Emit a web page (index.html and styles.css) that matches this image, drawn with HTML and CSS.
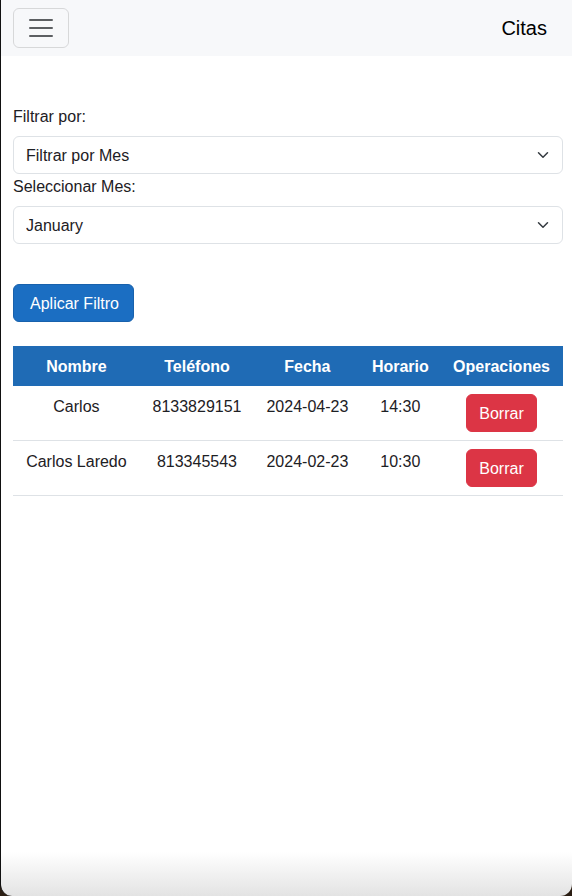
FILE: index.html
```html
<!DOCTYPE html>
<html lang="es">
<head>
<meta charset="utf-8">
<title>Citas</title>
<link rel="stylesheet" href="styles.css">
</head>
<body>
<div class="frame">
  <nav class="navbar">
    <button class="toggler" type="button" aria-label="Menu">
      <svg width="30" height="30" viewBox="0 0 30 30"><path d="M4 7h22M4 15h22M4 23h22" stroke="#5c5f62" stroke-width="2" stroke-linecap="round"/></svg>
    </button>
    <span class="brand">Citas</span>
  </nav>
  <main class="content">
    <label class="label">Filtrar por:</label>
    <div class="select-wrap">
      <select class="select"><option>Filtrar por Mes</option></select>
      <svg class="chevron" width="16" height="12" viewBox="0 0 16 16"><path d="m2 5 6 6 6-6" fill="none" stroke="#343a40" stroke-width="2" stroke-linecap="round" stroke-linejoin="round"/></svg>
    </div>
    <label class="label">Seleccionar Mes:</label>
    <div class="select-wrap">
      <select class="select"><option>January</option></select>
      <svg class="chevron" width="16" height="12" viewBox="0 0 16 16"><path d="m2 5 6 6 6-6" fill="none" stroke="#343a40" stroke-width="2" stroke-linecap="round" stroke-linejoin="round"/></svg>
    </div>
    <div class="actions">
      <button class="btn btn-primary" type="button">Aplicar Filtro</button>
    </div>
    <table class="table">
      <thead>
        <tr><th>Nombre</th><th>Teléfono</th><th>Fecha</th><th>Horario</th><th>Operaciones</th></tr>
      </thead>
      <tbody>
        <tr><td>Carlos</td><td>8133829151</td><td>2024-04-23</td><td>14:30</td><td><button class="btn btn-danger" type="button">Borrar</button></td></tr>
        <tr><td>Carlos Laredo</td><td>813345543</td><td>2024-02-23</td><td>10:30</td><td><button class="btn btn-danger" type="button">Borrar</button></td></tr>
      </tbody>
    </table>
  </main>
</div>
</body>
</html>
```
FILE: styles.css
```css
* { box-sizing: border-box; }
html, body { margin: 0; padding: 0; background: #2a1d12; }
body {
  font-family: "Liberation Sans", Arial, Helvetica, sans-serif;
  font-size: 16px;
  line-height: 24px;
  color: #1d2024;
}
.frame {
  min-height: 896px;
  border-left: 1px solid #111;
  border-radius: 0 0 12px 12px;
  background: linear-gradient(to bottom, #ffffff 0, #ffffff calc(100% - 44px), #e3e3e3 100%);
  overflow: hidden;
}
.navbar {
  display: flex;
  align-items: center;
  justify-content: space-between;
  height: 56px;
  padding: 8px 25px 8px 12px;
  background: #f7f8fa;
}
.toggler {
  display: flex;
  align-items: center;
  justify-content: center;
  width: 56px;
  height: 40px;
  padding: 0;
  background: transparent;
  border: 1px solid rgba(0,0,0,0.13);
  border-radius: 6px;
}
.brand {
  font-size: 20px;
  line-height: 30px;
  color: #000;
}
.content {
  padding: 48px 9px 0 12px;
  display: flex;
  flex-direction: column;
}
.label {
  display: block;
  padding-top: 1px;
  margin-bottom: 7px;
}
.select-wrap {
  position: relative;
}
.select {
  display: block;
  width: 100%;
  height: 38px;
  padding: 7px 36px 5px 12px;
  font: inherit;
  color: #1d2024;
  background: #fff;
  border: 1px solid #dee2e6;
  border-radius: 6px;
  appearance: none;
  -webkit-appearance: none;
}
.chevron {
  position: absolute;
  right: 12px;
  top: 13px;
  pointer-events: none;
}
.actions {
  margin-top: 40px;
  margin-bottom: 24px;
}
.btn {
  display: inline-block;
  padding: 7px 12px 5px;
  font: inherit;
  line-height: 24px;
  color: #fff;
  border: 1px solid transparent;
  border-radius: 6px;
}
.btn-primary {
  padding-left: 16px;
  padding-right: 14px;
  background: #1b6ec2;
  border-color: #1861ac;
}
.btn-danger {
  background: #dc3545;
  border-color: #dc3545;
}
.table {
  width: 100%;
  border-collapse: collapse;
}
.table th {
  padding: 9px 8px 7px;
  background: #1f6bb5;
  color: #fff;
  font-weight: 700;
  text-align: center;
}
.table td {
  padding: 9px 8px 7px;
  text-align: center;
  vertical-align: top;
  border-bottom: 1px solid #dee2e6;
}
.table td:last-child {
  padding-top: 8px;
  padding-bottom: 8px;
}
```
